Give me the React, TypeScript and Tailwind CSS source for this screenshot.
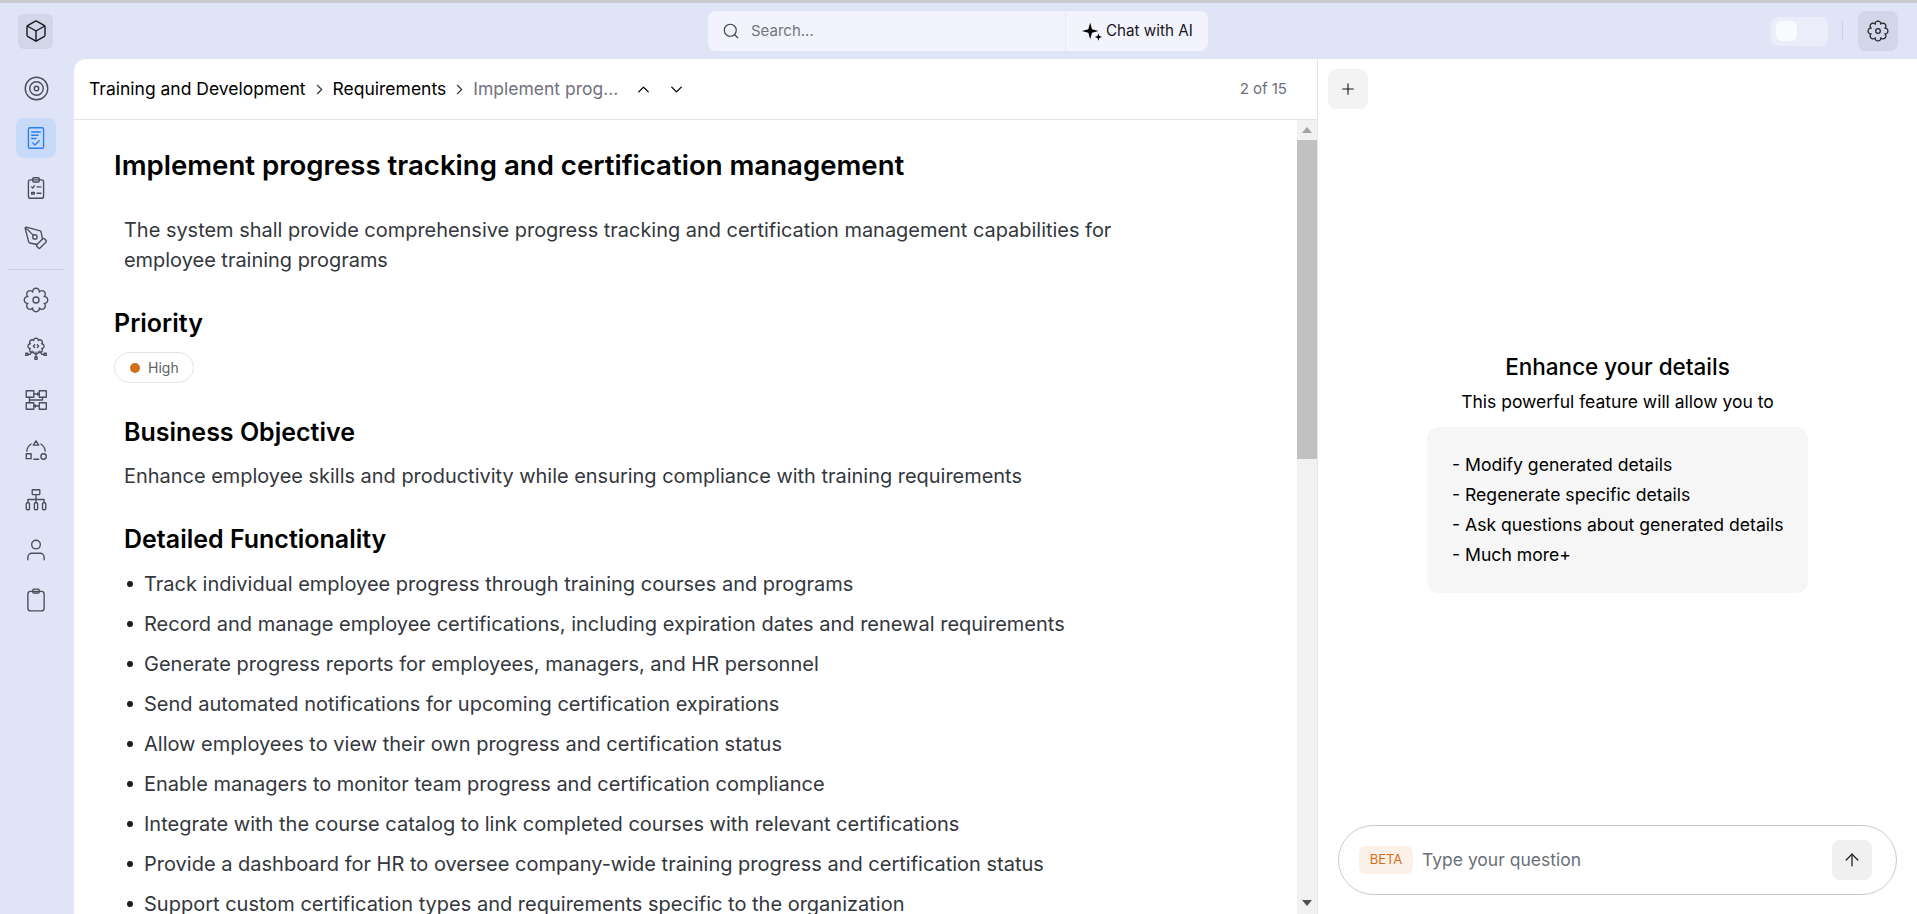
import { ArrowUp, Box, ChevronDown, ChevronRight, ChevronUp, PenTool, Plus, Search, Target } from 'lucide-react';
import type { ReactNode } from 'react';

const bullets = [
  'Track individual employee progress through training courses and programs',
  'Record and manage employee certifications, including expiration dates and renewal requirements',
  'Generate progress reports for employees, managers, and HR personnel',
  'Send automated notifications for upcoming certification expirations',
  'Allow employees to view their own progress and certification status',
  'Enable managers to monitor team progress and certification compliance',
  'Integrate with the course catalog to link completed courses with relevant certifications',
  'Provide a dashboard for HR to oversee company-wide training progress and certification status',
  'Support custom certification types and requirements specific to the organization',
];

const features = [
  'Modify generated details',
  'Regenerate specific details',
  'Ask questions about generated details',
  'Much more+',
];

// scalloped 8 tooth cog outline
function gearPath(cx: number, cy: number, valley: number, tip: number) {
  const pt = (r: number, a: number) => `${(cx + r * Math.cos(a)).toFixed(2)} ${(cy + r * Math.sin(a)).toFixed(2)}`;
  const step = (Math.PI * 2) / 8;
  let d = `M${pt(valley, -step / 2)}`;
  for (let i = 0; i < 8; i++) {
    const a = -step / 2 + i * step;
    d += ` C${pt(tip, a + step * 0.12)} ${pt(tip, a + step * 0.88)} ${pt(valley, a + step)}`;
  }
  return d + 'Z';
}

function Icon({ children, className = 'text-[#4a4f59]' }: { children: ReactNode; className?: string }) {
  return (
    <svg viewBox="0 0 24 24" fill="none" stroke="currentColor" strokeWidth="1.25" strokeLinecap="round" strokeLinejoin="round" className={`h-[26px] w-[26px] ${className}`}>
      {children}
    </svg>
  );
}

function NavButton({ children, active = false }: { children: ReactNode; active?: boolean }) {
  return (
    <div className={`flex h-10 w-10 items-center justify-center rounded-lg ${active ? 'bg-[#c8daf9]' : ''}`}>
      {children}
    </div>
  );
}

function Sidebar() {
  return (
    <aside className="flex w-[74px] shrink-0 flex-col items-center gap-2.5 pr-[2px] pt-[9px]">
      <NavButton>
        <Target className="h-[27px] w-[27px] text-[#4a4f59]" strokeWidth={1.25} />
      </NavButton>
      <NavButton active>
        <Icon className="text-[#2b7ff0]">
          <rect x="5" y="2.500" width="14" height="19" rx="1.500" />
          <path d="M8 6.500h8M8 9.500h6M8 12.500h4M9 16.500l2 2 4-4" />
        </Icon>
      </NavButton>
      <NavButton>
        <Icon>
          <rect x="5" y="4.500" width="14" height="17" rx="2" />
          <rect x="9" y="2.500" width="6" height="4" rx="1" />
          <path d="M8 11l1 1 1.500-2M13 11h3.500M8 16h2.500v1.500H8zM13 16.800h3.500" />
        </Icon>
      </NavButton>
      <NavButton>
        <PenTool className="h-[26px] w-[26px] text-[#4a4f59]" strokeWidth={1.25} />
      </NavButton>
      <div className="mt-px h-px w-[56px] bg-[#c9cfe4]" />
      <NavButton>
        <Icon>
          <path d={gearPath(12, 12, 8, 12.500)} />
          <circle cx="12" cy="12" r="2.800" />
        </Icon>
      </NavButton>
      <NavButton>
        <Icon>
          <path d={gearPath(12, 8.500, 5.600, 8.500)} />
          <path d="M10.800 7.200l-1.200 1.300 1.200 1.300M13.200 7.200l1.200 1.300-1.200 1.300M12 14v4.500M8.500 13l-2 3h-2M15.500 13l2 3h2" />
          <rect x="2.500" y="15" width="2" height="2" />
          <rect x="19.500" y="15" width="2" height="2" />
          <rect x="11" y="18.500" width="2" height="2" />
        </Icon>
      </NavButton>
      <NavButton>
        <Icon>
          <rect x="3" y="3.500" width="7" height="6" />
          <rect x="15" y="3.500" width="6.500" height="6" />
          <rect x="3" y="14.500" width="7" height="6" />
          <rect x="15" y="14.500" width="6.500" height="6" />
          <path d="M10 6.500h5M13.500 5.500l1.500 1-1.500 1M15 17.500h-5M11.500 16.500l-1.500 1 1.500 1M6 9.500v5M18 9.500v2.500H6" />
        </Icon>
      </NavButton>
      <NavButton>
        <Icon>
          <path d="M12 3.500l2.500 4h-5z" />
          <rect x="3" y="15.500" width="4.500" height="4.500" />
          <circle cx="19" cy="18" r="2.500" />
          <path d="M7.500 6.500a9 9 0 0 0-4 6.500M16.500 6.500a9 9 0 0 1 4 6.500M10 20.500h4.500" />
        </Icon>
      </NavButton>
      <NavButton>
        <Icon>
          <rect x="8.500" y="2.500" width="7" height="4.500" rx="0.500" />
          <path d="M12 7v4.500M4.500 14v-2.500h15V14M12 11.500V14" />
          <rect x="3" y="14.500" width="3" height="6.500" rx="1" />
          <rect x="10.500" y="14.500" width="3" height="6.500" rx="1" />
          <rect x="18" y="14.500" width="3" height="6.500" rx="1" />
        </Icon>
      </NavButton>
      <NavButton>
        <Icon>
          <circle cx="12" cy="7" r="4" />
          <path d="M4.500 21v-2.500a3.500 3.500 0 0 1 3.500-3.500h8a3.500 3.500 0 0 1 3.500 3.500V21" />
        </Icon>
      </NavButton>
      <NavButton>
        <Icon>
          <rect x="4.500" y="4" width="15" height="18" rx="2.500" />
          <rect x="9" y="2" width="6" height="3.500" rx="1" />
        </Icon>
      </NavButton>
    </aside>
  );
}

function TopBar() {
  return (
    <header className="grid h-14 shrink-0 grid-cols-[708px_500px_1fr] items-center">
      <div className="pl-[18px]">
        <div className="flex h-[35px] w-[35px] items-center justify-center rounded-md bg-[#d1d6e8]">
          <Box className="h-[24px] w-[24px] text-[#17181c]" strokeWidth={1.4} />
        </div>
      </div>
      <div className="flex h-10 items-center rounded-lg bg-[#f2f3fc]">
        <div className="flex flex-1 items-center gap-[11px] pl-[14px]">
          <Search className="h-[18px] w-[18px] text-[#3f434b]" strokeWidth={1.5} />
          <span className="text-[15px] text-[#71757e]">Search...</span>
        </div>
        <div className="flex h-full w-[143px] items-center gap-[3px] border-l border-[#e6e8f3] pl-[15px]">
          <svg viewBox="0 0 24 24" className="h-[22px] w-[22px] text-black" fill="currentColor">
            <path d="M10 3l2 7 7 2-7 2-2 7-2-7-7-2 7-2z" />
            <path d="M19 14.500l1 3 3 1-3 1-1 3-1-3-3-1 3-1z" />
          </svg>
          <span className="text-[15.200px] text-[#17181c]">Chat with AI</span>
        </div>
      </div>
      <div className="flex items-center justify-end gap-[15px] pr-[19px]">
        <div className="-mr-px flex h-[29px] w-[57px] items-center rounded-lg bg-[#ebeefa] pl-[5px]">
          <div className="h-5 w-[21px] rounded-md bg-[#f9fafe]" />
        </div>
        <div className="h-5 w-px bg-[#ccd2e6]" />
        <div className="flex h-10 w-10 items-center justify-center rounded-lg bg-[#d1d6e8]">
          <svg viewBox="0 0 24 24" fill="none" stroke="currentColor" strokeWidth="1.400" strokeLinejoin="round" className="h-[22px] w-[22px] text-[#24262b]">
            <path d={gearPath(12, 12, 8, 12.500)} />
            <circle cx="12" cy="12" r="2.500" />
          </svg>
        </div>
      </div>
    </header>
  );
}

function Breadcrumbs() {
  return (
    <div className="flex h-[61px] shrink-0 items-center border-b border-[#e5e5e5] pl-[15px] pr-[30px]">
      <span className="text-[17.500px] text-black">Training and Development</span>
      <ChevronRight className="mx-[5px] h-[17px] w-[17px] text-[#33363c]" strokeWidth={1.6} />
      <span className="text-[17.500px] text-black">Requirements</span>
      <ChevronRight className="mx-[5px] h-[17px] w-[17px] text-[#33363c]" strokeWidth={1.6} />
      <span className="text-[17.500px] text-[#6f737b]">Implement prog...</span>
      <ChevronUp className="ml-4 h-[19px] w-[19px] text-black" strokeWidth={1.7} />
      <ChevronDown className="ml-[14px] h-[19px] w-[19px] text-black" strokeWidth={1.7} />
      <span className="ml-auto mt-px text-[15px] text-[#6b7078]">2 of 15</span>
    </div>
  );
}

function Scrollbar() {
  return (
    <div className="flex w-5 shrink-0 flex-col items-center bg-[#f1f1f1]">
      <div className="mt-[7px] h-0 w-0 border-x-[5px] border-b-[6px] border-x-transparent border-b-[#a3a3a3]" />
      <div className="mt-[7px] h-[319px] w-full bg-[#c1c1c1]" />
      <div className="mb-[8px] mt-auto h-0 w-0 border-x-[5px] border-t-[6px] border-x-transparent border-t-[#505050]" />
    </div>
  );
}

function Article() {
  return (
    <div className="flex-1 overflow-hidden pl-10 pt-[27px]">
      <h1 className="text-[27.600px] font-semibold leading-9 text-black">Implement progress tracking and certification management</h1>
      <p className="ml-[10px] mt-8 w-[1040px] text-[19.950px] leading-[30px] text-[#33373d]">
        The system shall provide comprehensive progress tracking and certification management capabilities for employee training programs
      </p>
      <h2 className="mt-8 text-[25px] font-semibold leading-8 text-black">Priority</h2>
      <div className="mt-[13px] flex h-[31px] w-20 items-center gap-2 rounded-full border border-[#e3e3e3] pl-[15px]">
        <span className="h-[10px] w-[10px] rounded-full bg-[#d0701a]" />
        <span className="text-[14px] text-[#5d6168]">High</span>
      </div>
      <h2 className="ml-[10px] mt-[33px] text-[25px] font-semibold leading-8 text-black">Business Objective</h2>
      <p className="ml-[10px] mt-[13px] text-[19.950px] leading-[30px] text-[#33373d]">
        Enhance employee skills and productivity while ensuring compliance with training requirements
      </p>
      <h2 className="ml-[10px] mt-8 text-[25px] font-semibold leading-8 text-black">Detailed Functionality</h2>
      <ul className="ml-[10px] mt-[14px] flex flex-col gap-2.5">
        {bullets.map((item) => (
          <li key={item} className="flex items-center text-[20px] leading-[30px] text-[#33373d]">
            <span className="ml-[3px] mr-[11px] h-[6px] w-[6px] shrink-0 rounded-full bg-[#1c1c1c]" />
            {item}
          </li>
        ))}
      </ul>
    </div>
  );
}

function AssistantPanel() {
  return (
    <section className="flex flex-1 flex-col">
      <div className="pl-[10px] pt-[10px]">
        <div className="flex h-10 w-10 items-center justify-center rounded-lg bg-[#f3f3f3]">
          <Plus className="h-[18px] w-[18px] text-[#17181c]" strokeWidth={1.5} />
        </div>
      </div>
      <div className="flex flex-1 flex-col items-center pt-[243px]">
        <h3 className="text-[22.500px] font-medium leading-[30px] text-black">Enhance your details</h3>
        <p className="mt-[6px] text-[17.500px] leading-7 text-black">This powerful feature will allow you to</p>
        <ul className="mt-[11px] h-[166px] w-[381px] rounded-xl bg-[#f6f6f6] pl-[25px] pt-[23px] text-[17.600px] leading-[30px] text-black">
          {features.map((item) => (
            <li key={item}>- {item}</li>
          ))}
        </ul>
      </div>
      <div className="mx-5 mb-[19px] flex h-[70px] items-center rounded-full border border-[#cccccc] pl-5 pr-[24px]">
        <span className="flex h-7 w-[54px] items-center justify-center rounded-md bg-[#fcf1e8] text-[13px] text-[#d0701a]">BETA</span>
        <span className="ml-[9px] mt-px text-[17.500px] text-[#6b7078]">Type your question</span>
        <div className="ml-auto flex h-10 w-10 items-center justify-center rounded-lg bg-[#f0f0f0]">
          <ArrowUp className="h-[20px] w-[20px] text-[#17181c]" strokeWidth={1.5} />
        </div>
      </div>
    </section>
  );
}

export default function App() {
  return (
    <div className="flex h-[914px] w-full flex-col overflow-hidden bg-[#dfe4f6] font-['Inter',sans-serif]">
      <div className="h-[3px] shrink-0 bg-[#c9cbcc]" />
      <TopBar />
      <div className="flex min-h-0 flex-1">
        <Sidebar />
        <main className="flex min-w-0 flex-1 overflow-hidden rounded-tl-xl bg-white">
          <div className="flex w-[1244px] shrink-0 flex-col border-r border-[#e5e5e5]">
            <Breadcrumbs />
            <div className="flex min-h-0 flex-1">
              <Article />
              <Scrollbar />
            </div>
          </div>
          <AssistantPanel />
        </main>
      </div>
    </div>
  );
}
